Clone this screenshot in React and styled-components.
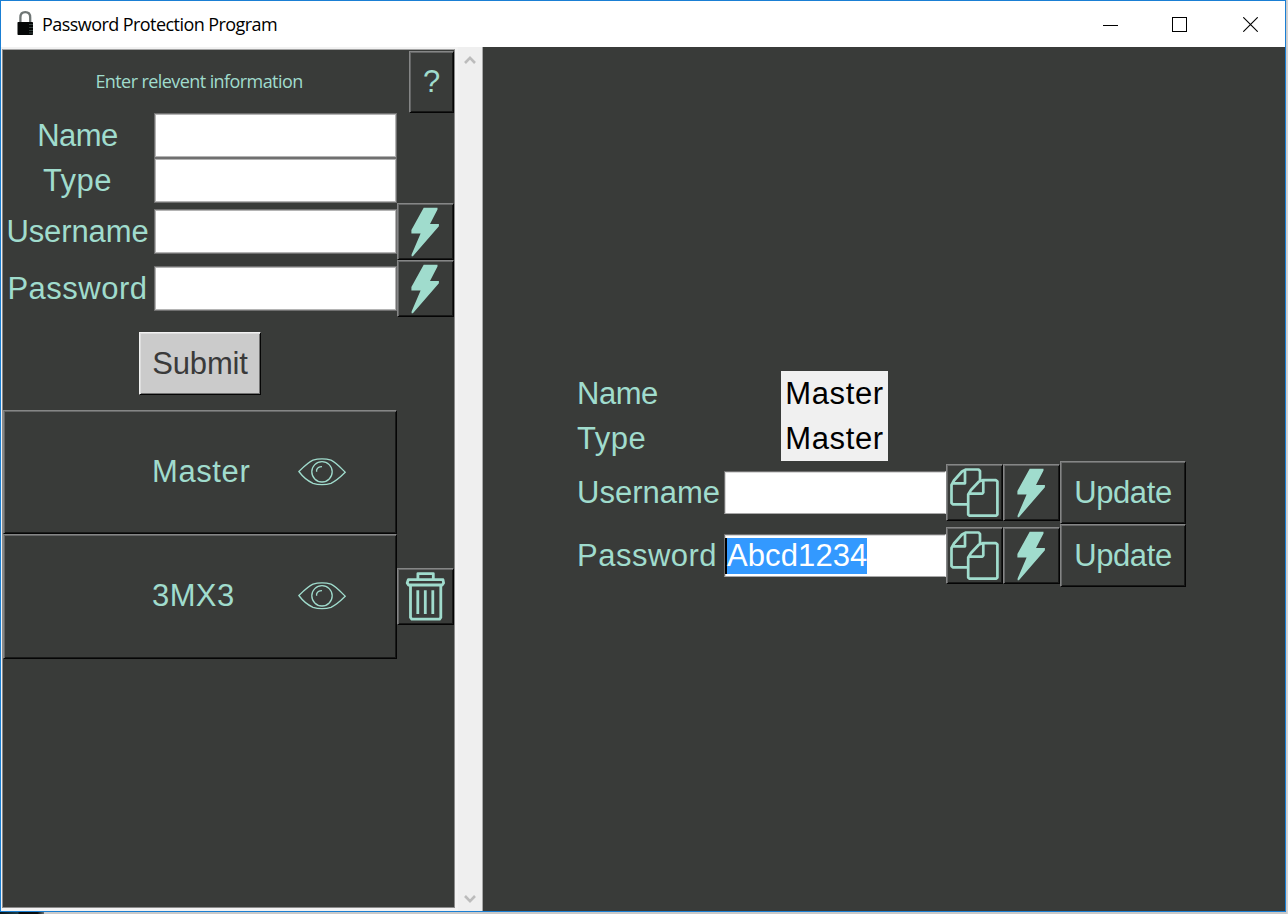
import React from "react";
import styled, { createGlobalStyle, css } from "styled-components";

const mint = "#a0dccd";
const dark = "#393b39";

const GlobalStyle = createGlobalStyle`
  * { box-sizing: border-box; }
  body { margin: 0; overflow: hidden; background: #c9c9c9; }
  svg { display: block; flex: none; }
`;

const Desktop = styled.div`
  width: 1288px;
  height: 914px;
  display: flex;
  flex-direction: column;
  background: linear-gradient(to right, #c9c9c9 1286px, #d8d8d8);
`;

const Window = styled.div`
  width: 1286px;
  height: 912px;
  display: flex;
  flex-direction: column;
  border: 1px solid #1a7fd4;
  background: #f0f0f0;
`;

const BackdropSliver = styled.div`
  width: 44px;
  height: 2px;
  background: linear-gradient(to right, #0b1518, #1b3d4a 40%, #050808 45%, #0a0f10 85%, #6b7173);
`;

const TitleBar = styled.header`
  height: 46px;
  display: flex;
  align-items: center;
  background: #fff;
`;

const Title = styled.div`
  flex: 1;
  margin-left: 8px;
  color: #000;
  font: 18px/24px "Open Sans", "Noto Sans", sans-serif;
  letter-spacing: -0.56px;
  white-space: nowrap;
`;

const WindowButton = styled.div`
  width: 70px;
  height: 44px;
  display: flex;
  align-items: center;
  justify-content: center;
`;

const Body = styled.main`
  flex: 1;
  display: flex;
  min-height: 0;
`;

const SideFrame = styled.div`
  width: 457px;
  padding: 2px 3px 3px 1px;
  background: #f2f2f2;
`;

const Side = styled.section`
  height: 859px;
  width: 453px;
  background: ${dark};
  border: 1px solid #8b8b8b;
  border-top-color: #a5a5a5;
`;

const Form = styled.div`
  display: grid;
  grid-template-columns: 151px 243px 57px;
  grid-template-rows: 63px 45px 45px 57px 57px;
  align-items: center;
`;

const Heading = styled.div`
  grid-column: 1 / 3;
  padding: 0 2px 2px 0;
  text-align: center;
  color: ${mint};
  font: 18px/24px "Open Sans", "Noto Sans", sans-serif;
  letter-spacing: -0.58px;
  white-space: nowrap;
`;

const text = css`
  font-family: "Liberation Sans", Arial, sans-serif;
  font-size: 31px;
  line-height: 36px;
  letter-spacing: ${(p) => p.$ls || 0}px;
  white-space: nowrap;
`;

const Label = styled.label`
  ${text}
  color: ${mint};
  text-align: ${(p) => p.$align || "center"};
  padding-left: ${(p) => (p.$align ? 1 : 0)}px;
  padding-right: ${(p) => (p.$align ? 0 : 2)}px;
`;

const Field = styled.div`
  ${text}
  grid-column-end: ${(p) => (p.$wide ? "span 2" : "auto")};
  width: ${(p) => p.$width || 243}px;
  height: ${(p) => p.$height || 45}px;
  display: flex;
  align-items: center;
  padding-left: 1px;
  color: #fff;
  background: #fff;
  border: 1px solid #707070;
  box-shadow: inset 0 0 0 1px #b4b4b4;
`;

const DetailField = styled(Field)`
  border-right-color: #fff;
  border-bottom-color: #a8a8a8;
  box-shadow: inset 1px 1px 0 #d8d8d8;
`;

const raised = css`
  border: 1px solid #858686;
  border-right-color: #050505;
  border-bottom-color: #050505;
  box-shadow: inset 1px 1px 0 #656666, inset -1px -1px 0 #181918;
  background: ${dark};
  color: ${mint};
`;

const Button = styled.button`
  ${text}
  ${raised}
  appearance: none;
  border-radius: 0;
  margin: 0;
  padding: 0;
  width: ${(p) => p.$w}px;
  height: ${(p) => p.$h}px;
  display: flex;
  align-items: center;
  justify-content: center;
`;

const HelpButton = styled(Button)`
  justify-self: end;
`;

const SubmitButton = styled(Button)`
  margin: 15px 0 0 136px;
  padding-top: 1px;
  color: #3a3a3a;
  background: #cbcbcb;
  border-color: #f2f2f2 #050505 #050505 #f2f2f2;
  box-shadow: inset 1px 1px 0 #dedede, inset -1px -1px 0 #747474;
`;

const List = styled.div`
  margin-top: 15px;
`;

const ListRow = styled.div`
  height: 124px;
  display: flex;
  align-items: center;
`;

const EntryButton = styled(Button)`
  justify-content: flex-start;
  padding-left: 148px;
`;

const EntryName = styled.span`
  width: 146px;
  text-align: left;
`;

const Scrollbar = styled.div`
  width: 25px;
  display: flex;
  flex-direction: column;
  justify-content: space-between;
  align-items: center;
  padding: 8px 1px 7px 0;
  background: #efefef;
  border-right: 1px solid #a8a8a8;
`;

const Detail = styled.section`
  flex: 1;
  padding: 324px 0 0 93px;
  background: ${dark};
`;

const DetailGrid = styled.div`
  display: grid;
  grid-template-columns: 148px 222px 57px 57px 126px;
  grid-template-rows: 45px 45px 63px 63px;
  align-items: center;
`;

const Value = styled.div`
  ${text}
  justify-self: center;
  width: 107px;
  height: 45px;
  display: flex;
  align-items: center;
  justify-content: center;
  margin-right: 1px;
  color: #000;
  background: #f0f0f0;
  grid-column: 2 / 3;
`;

const Selection = styled.span`
  height: 36px;
  background: #3399ff;
  border-left: 2px solid #000;
  margin-left: -1px;
`;

const BoltIcon = styled.svg`
  margin: -1px;
`;

const Bolt = () => (
  <BoltIcon width="57" height="57" viewBox="0 0 57 57">
    <path fill={mint} d="M26.7 4.8H40.5V6.5L33 20.9H41.9V23.3L15.9 53.2H14.6V51.4L23.6 30.6H14.4V27Z" />
  </BoltIcon>
);

const Copy = () => (
  <svg width="57" height="57" viewBox="0 0 57 57" fill="none" stroke={mint} strokeWidth="2.7" strokeLinejoin="round">
    <path d="M22 40.3H6.8L5.5 39V21L8 16.5L16 7.5L20 5.5H32.5L34 7V16M19 6V19.3H6" />
    <path d="M22.2 50.5V30.5L25 26L33 17.5L36.5 16.2H50L51.4 17.5V50.5L50.3 51.6H23.3ZM37.3 16.6V28.5L36.3 29.7H23" />
  </svg>
);

const Trash = () => (
  <svg width="57" height="57" viewBox="0 0 57 57" fill="none" stroke={mint} strokeWidth="2.8" strokeLinejoin="round">
    <path d="M20.9 11.5V5.6H36.3V11.5M11.3 11.7H46L46.6 15L45.2 17H11.5L10.2 15ZM13.5 17.5V49.5L14.8 51.2H42.6L43.8 49.5V17.5" />
    <path d="M20.8 22.3V46M28.3 22.3V46M35.8 22.3V46" />
  </svg>
);

const Eye = () => (
  <svg width="48" height="28" viewBox="0 0 48 28" fill="none" stroke={mint} strokeWidth="1.3">
    <path d="M0.9 13.5C5 9.5 10 4.5 15 2.2Q19 0.8 24 0.8T33 2.2C38 4.5 43 10 47.2 14.3C43 18.5 38 23 33 25.3Q29 26.7 24 26.7T15 25.3C10 23 4.5 18.5 0.9 13.5Z" />
    <circle cx="24" cy="13.8" r="10.2" />
    <path d="M18.6 13.8V12Q19.5 8.6 24 8.6" />
  </svg>
);

const LockIcon = styled.svg`
  margin: -2px 0 0 16px;
`;

const Lock = () => (
  <LockIcon width="17" height="25" viewBox="0 0 17 25">
    <path d="M3.4 12V6.5C3.4 3 5.3 1.2 8.3 1.2S13.2 3 13.2 6.5V12" fill="none" stroke="#6f7675" strokeWidth="2.3" />
    <rect x="0.5" y="11" width="15.5" height="13" rx="0.8" fill="#050707" />
    <path d="M12 13.5H16M12 16.5H16M12 19.5H16M12 22H16" stroke="#33403d" strokeWidth="1" />
  </LockIcon>
);

const Chevron = ({ down }) => (
  <svg width="12" height="10" viewBox="0 0 12 10" fill="none" stroke="#bcbcbc" strokeWidth="2.6">
    <path d={down ? "M1 2L6 7.2L11 2" : "M1 8L6 2.8L11 8"} />
  </svg>
);

const IconButton = ({ children }) => (
  <Button $w={57} $h={57}>{children}</Button>
);

export default function App() {
  return (
    <Desktop>
      <GlobalStyle />
      <Window>
        <TitleBar>
          <Lock />
          <Title>Password Protection Program</Title>
          <WindowButton>
            <svg width="15" height="15"><path d="M0 8.5H15" stroke="#000" /></svg>
          </WindowButton>
          <WindowButton>
            <svg width="17" height="15"><rect x="0.5" y="0.5" width="14" height="14" fill="none" stroke="#000" /></svg>
          </WindowButton>
          <WindowButton>
            <svg width="15" height="15"><path d="M0.3 0.3L14.7 14.7M14.7 0.3L0.3 14.7" stroke="#000" strokeWidth="1.1" /></svg>
          </WindowButton>
        </TitleBar>
        <Body>
          <SideFrame>
            <Side>
              <Form>
                <Heading>Enter relevent information</Heading>
                <HelpButton $w={45} $h={62}>?</HelpButton>
                <Label $ls={-0.5}>Name</Label>
                <Field $wide />
                <Label $ls={0.5}>Type</Label>
                <Field $wide />
                <Label $ls={-0.1}>Username</Label>
                <Field />
                <IconButton><Bolt /></IconButton>
                <Label $ls={0.5}>Password</Label>
                <Field />
                <IconButton><Bolt /></IconButton>
              </Form>
              <SubmitButton $w={122} $h={63} $ls={-0.2}>Submit</SubmitButton>
              <List>
                <ListRow>
                  <EntryButton $w={394} $h={124} $ls={0.6}><EntryName>Master</EntryName><Eye /></EntryButton>
                </ListRow>
                <ListRow>
                  <EntryButton $w={394} $h={125} $ls={0.4}><EntryName>3MX3</EntryName><Eye /></EntryButton>
                  <IconButton><Trash /></IconButton>
                </ListRow>
              </List>
            </Side>
          </SideFrame>
          <Scrollbar>
            <Chevron />
            <Chevron down />
          </Scrollbar>
          <Detail>
            <DetailGrid>
              <Label $align="left" $ls={-0.5}>Name</Label>
              <Value $ls={0.6}>Master</Value>
              <Label $align="left" $ls={0.5} style={{ gridColumn: 1 }}>Type</Label>
              <Value $ls={0.6}>Master</Value>
              <Label $align="left" style={{ gridColumn: 1 }}>Username</Label>
              <DetailField $width={222} $height={43} />
              <IconButton><Copy /></IconButton>
              <IconButton><Bolt /></IconButton>
              <Button $w={126} $h={63} $ls={-0.4}>Update</Button>
              <Label $align="left" $ls={0.5}>Password</Label>
              <DetailField $width={222} $height={43} $ls={0.1}><Selection>Abcd1234</Selection></DetailField>
              <IconButton><Copy /></IconButton>
              <IconButton><Bolt /></IconButton>
              <Button $w={126} $h={63} $ls={-0.4}>Update</Button>
            </DetailGrid>
          </Detail>
        </Body>
      </Window>
      <BackdropSliver />
    </Desktop>
  );
}
